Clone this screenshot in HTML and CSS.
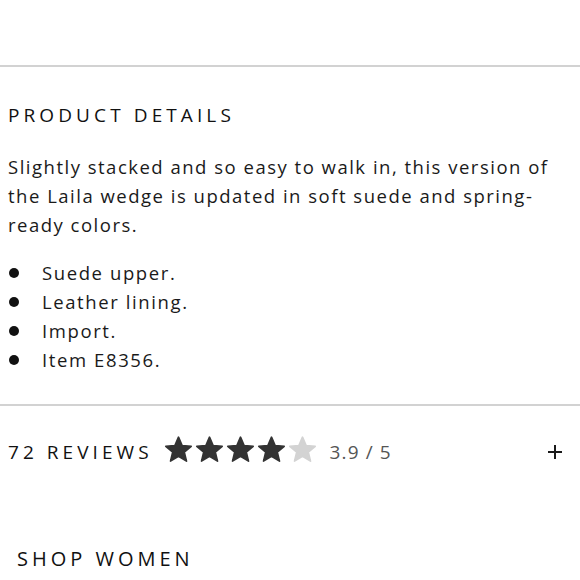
FILE: index.html
```html
<!DOCTYPE html>
<html lang="en">
<head>
<meta charset="utf-8">
<link rel="stylesheet" href="styles.css">
</head>
<body>
<div class="top"></div>
<section class="details">
  <h2 class="title">PRODUCT DETAILS</h2>
  <p class="desc">Slightly stacked and so easy to walk in, this version of the Laila wedge is updated in soft suede and spring-ready colors.</p>
  <ul class="list">
    <li>Suede upper.</li>
    <li>Leather lining.</li>
    <li>Import.</li>
    <li>Item E8356.</li>
  </ul>
</section>
<section class="reviews">
  <span class="count">72 REVIEWS</span>
  <span class="stars">
    <svg class="star on" viewBox="0 0 24 24"><path d="M12 1.8l3 6.9 7.5.6-5.7 4.9 1.8 7.4L12 17.7l-6.6 3.9 1.8-7.4-5.7-4.9 7.5-.6z"/></svg>
    <svg class="star on" viewBox="0 0 24 24"><path d="M12 1.8l3 6.9 7.5.6-5.7 4.9 1.8 7.4L12 17.7l-6.6 3.9 1.8-7.4-5.7-4.9 7.5-.6z"/></svg>
    <svg class="star on" viewBox="0 0 24 24"><path d="M12 1.8l3 6.9 7.5.6-5.7 4.9 1.8 7.4L12 17.7l-6.6 3.9 1.8-7.4-5.7-4.9 7.5-.6z"/></svg>
    <svg class="star on" viewBox="0 0 24 24"><path d="M12 1.8l3 6.9 7.5.6-5.7 4.9 1.8 7.4L12 17.7l-6.6 3.9 1.8-7.4-5.7-4.9 7.5-.6z"/></svg>
    <svg class="star off" viewBox="0 0 24 24"><path d="M12 1.8l3 6.9 7.5.6-5.7 4.9 1.8 7.4L12 17.7l-6.6 3.9 1.8-7.4-5.7-4.9 7.5-.6z"/></svg>
  </span>
  <span class="score">3.9 / 5</span>
  <span class="plus"><svg viewBox="0 0 16 16" width="16" height="16"><path d="M8 1v14M1 8h14" stroke="#1a1a1a" stroke-width="2"/></svg></span>
</section>
<section class="shop">
  <h2 class="shop-title">SHOP WOMEN</h2>
</section>
</body>
</html>
```
FILE: styles.css
```css
* { box-sizing: border-box; }
html, body { margin: 0; padding: 0; background: #fff; }
body {
  font-family: "Open Sans", "Liberation Sans", sans-serif;
  color: #1a1a1a;
  width: 580px;
  overflow: hidden;
}
.top {
  height: 67px;
  border-bottom: 2px solid #d2d2d2;
}
.details {
  padding: 35px 8px 0 8px;
  border-bottom: 2px solid #d2d2d2;
  height: 339px;
}
.title {
  margin: 0;
  font-size: 19px;
  font-weight: 400;
  letter-spacing: 4.1px;
  line-height: 26px;
  color: #111;
}
.desc {
  margin: 24px 0 0 0;
  font-size: 18.5px;
  line-height: 29px;
  letter-spacing: 1.5px;
  max-width: 566px;
}
.list {
  margin: 19px 0 0 0;
  padding: 0;
  list-style: none;
}
.list li {
  position: relative;
  padding-left: 34px;
  font-size: 18.5px;
  line-height: 29px;
  letter-spacing: 1.6px;
}
.list li::before {
  content: "";
  position: absolute;
  left: 1px;
  top: 10px;
  width: 10px;
  height: 10px;
  border-radius: 50%;
  background: #111;
}
.reviews {
  display: flex;
  align-items: center;
  height: 92px;
  padding: 0 17px 0 8px;
}
.count {
  font-size: 19px;
  letter-spacing: 4.05px;
  color: #111;
}
.stars {
  display: flex;
  gap: 2px;
  margin-left: 11px;
  margin-top: -5px;
}
.star { width: 29px; height: 29px; }
.star.on { fill: #333; stroke: #333; stroke-width: 1.4; stroke-linejoin: round; }
.star.off { fill: #d3d3d3; stroke: #d3d3d3; stroke-width: 1.4; stroke-linejoin: round; }
.score {
  margin-left: 13px;
  font-size: 19px;
  color: #555;
  letter-spacing: 1.1px;
}
.plus {
  margin-left: auto;
  display: flex;
}
.shop {
  padding: 47px 17px 0;
}
.shop-title {
  margin: 0;
  font-size: 20px;
  font-weight: 400;
  letter-spacing: 4px;
  color: #111;
}
```
